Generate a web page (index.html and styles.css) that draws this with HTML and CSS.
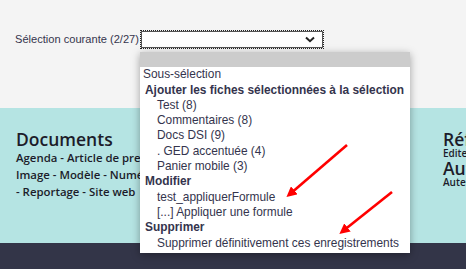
FILE: index.html
```html
<!DOCTYPE html>
<html lang="fr">
<head>
    <meta charset="UTF-8">
    <title>Sélection courante</title>
    <link rel="stylesheet" href="styles.css">
</head>
<body>
    <div class="page">

        <!-- Current selection toolbar -->
        <div class="toolbar">
            <span class="toolbar-label">Sélection courante (2/27)</span>
            <div class="select-box">
                <svg class="chevron" width="10" height="7" viewBox="0 0 10 7">
                    <path d="M1 1.5 L5 5.2 L9 1.5" fill="none" stroke="#222" stroke-width="2"/>
                </svg>
            </div>
        </div>

        <!-- Footer band -->
        <div class="footer-band">
            <div class="footer-col">
                <h2 class="footer-title">Documents</h2>
                <p class="footer-links">
                    Agenda - Article de presse - Communiqué -<br>
                    Image - Modèle - Numéro - Publication<br>
                    - Reportage - Site web
                </p>
            </div>
            <div class="footer-col footer-col-right">
                <h2 class="footer-title">Références</h2>
                <p class="footer-small">Editeurs</p>
                <h2 class="footer-title">Auteurs</h2>
                <p class="footer-small">Auteurs</p>
            </div>
        </div>

        <div class="footer-dark"></div>

        <!-- Open dropdown list -->
        <div class="dropdown">
            <div class="option option-empty"></div>
            <div class="option option-top">Sous-sélection</div>
            <div class="group">Ajouter les fiches sélectionnées à la sélection</div>
            <div class="option">Test (8)</div>
            <div class="option">Commentaires (8)</div>
            <div class="option">Docs DSI (9)</div>
            <div class="option">. GED accentuée (4)</div>
            <div class="option">Panier mobile (3)</div>
            <div class="group">Modifier</div>
            <div class="option">test_appliquerFormule</div>
            <div class="option">[...] Appliquer une formule</div>
            <div class="group">Supprimer</div>
            <div class="option">Supprimer définitivement ces enregistrements</div>
        </div>

        <!-- Annotation arrows -->
        <svg class="arrows" width="466" height="269" viewBox="0 0 466 269">
            <defs>
                <marker id="head" markerWidth="4" markerHeight="4" refX="2.2" refY="2" orient="auto" markerUnits="strokeWidth">
                    <path d="M0 0 L4 2 L0 4 Z" fill="#f00"/>
                </marker>
            </defs>
            <line x1="347" y1="145" x2="290" y2="194" stroke="#f00" stroke-width="2.6" marker-end="url(#head)"/>
            <line x1="392" y1="192" x2="343" y2="231" stroke="#f00" stroke-width="2.6" marker-end="url(#head)"/>
        </svg>

    </div>
</body>
</html>
```

FILE: styles.css
```css
body {
    margin: 0;
    background-color: #f4f4f4;
    font-family: "Liberation Sans", Arial, sans-serif;
    color: #34344d;
}

/* Page wrapper */
.page {
    position: relative;
    width: 466px;
    height: 269px;
    overflow: hidden;
}

/* Toolbar */
.toolbar {
    display: flex;
    align-items: flex-start;
    height: 108px;
    box-sizing: border-box;
    padding: 31px 0 0 15px;
}

.toolbar-label {
    font-size: 11.1px;
    line-height: 17px;
    margin-right: 2px;
}

.select-box {
    display: flex;
    justify-content: flex-end;
    align-items: center;
    width: 182px;
    height: 17px;
    box-sizing: border-box;
    background-color: #ffffff;
    outline: 1px dotted #222;
    border: 1px solid #555;
    padding-right: 7px;
}

/* Footer */
.footer-band {
    display: flex;
    justify-content: space-between;
    height: 135px;
    box-sizing: border-box;
    padding: 20px 0 0 16px;
    background-color: #b5e4e3;
    color: #1c1c2a;
}

.footer-col-right {
    width: 23px;
    white-space: nowrap;
}

.footer-title {
    margin: 0;
    font-family: "Open Sans", sans-serif;
    font-size: 17.5px;
    font-weight: 600;
    line-height: 22px;
}

.footer-links {
    margin: 0;
    font-family: "Open Sans", sans-serif;
    font-size: 11.4px;
    font-weight: 600;
    line-height: 16.8px;
    white-space: nowrap;
}

.footer-col-right .footer-title {
    line-height: 18px;
}

.footer-col-right .footer-title:first-child {
    margin-top: 2px;
}

.footer-small {
    margin: 0;
    font-family: "Open Sans", sans-serif;
    font-size: 10px;
    font-weight: 600;
    line-height: 11px;
}

.footer-dark {
    height: 26px;
    background-color: #333548;
}

/* Dropdown list */
.dropdown {
    position: absolute;
    left: 140px;
    top: 52px;
    width: 270px;
    height: 201px;
    background-color: #ffffff;
    box-shadow: 0 2px 8px rgba(0, 0, 0, 0.35);
    font-size: 11.9px;
    line-height: 15.3px;
    white-space: nowrap;
}

.option {
    height: 15.3px;
    padding-left: 17px;
}

.option-empty {
    background-color: #cccccc;
}

.option-top {
    padding-left: 3px;
}

.group {
    height: 15.3px;
    padding-left: 5px;
    font-weight: bold;
}

/* Arrows overlay */
.arrows {
    position: absolute;
    left: 0;
    top: 0;
    pointer-events: none;
}
```
